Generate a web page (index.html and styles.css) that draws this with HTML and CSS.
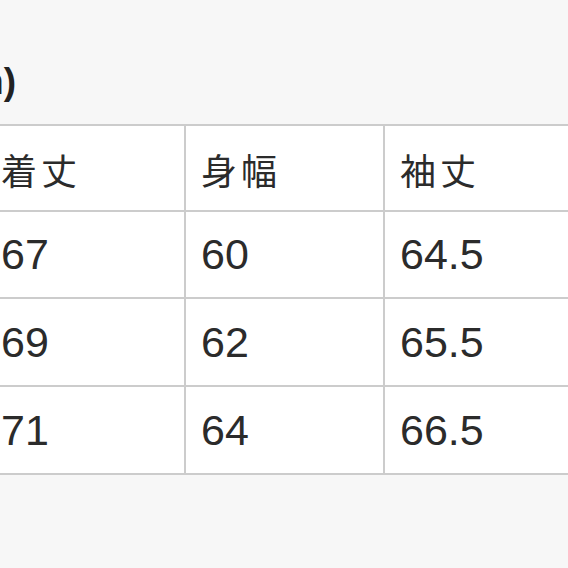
FILE: index.html
```html
<!DOCTYPE html>
<html lang="ja">
<head>
<meta charset="utf-8">
<title>サイズ表</title>
<link rel="stylesheet" href="styles.css">
</head>
<body>
<div class="page">
  <h2 class="title">サイズ(cm)</h2>
  <div class="size-table">
    <div class="cell head">着丈</div>
    <div class="cell head">身幅</div>
    <div class="cell head">袖丈</div>
    <div class="cell num">67</div>
    <div class="cell num">60</div>
    <div class="cell num">64.5</div>
    <div class="cell num">69</div>
    <div class="cell num">62</div>
    <div class="cell num">65.5</div>
    <div class="cell num">71</div>
    <div class="cell num">64</div>
    <div class="cell num">66.5</div>
  </div>
</div>
</body>
</html>
```
FILE: styles.css
```css
html, body {
  margin: 0;
  padding: 0;
  background: #f7f7f7;
  overflow: hidden;
}

body {
  font-family: "Liberation Sans", "Noto Sans CJK JP", sans-serif;
  color: #2b2b2b;
}

.page {
  padding-top: 62px;
  margin-left: -16px;
}

.title {
  margin: 0 0 22px -198px;
  width: 230px;
  text-align: right;
  font-size: 37px;
  line-height: 40px;
  font-weight: bold;
  color: #222;
}

.size-table {
  display: grid;
  grid-template-columns: 198px 197px 198px;
  grid-template-rows: 84px 85px 86px 86px;
  gap: 2px;
  padding: 2px;
  background: #cccccc;
  width: max-content;
}

.cell {
  background: #ffffff;
  display: flex;
  align-items: center;
  padding-left: 15px;
}

.head {
  font-family: "Noto Sans CJK JP", sans-serif;
  font-size: 36px;
  letter-spacing: 4px;
  padding-top: 2px;
}

.num {
  font-size: 43px;
}
```
